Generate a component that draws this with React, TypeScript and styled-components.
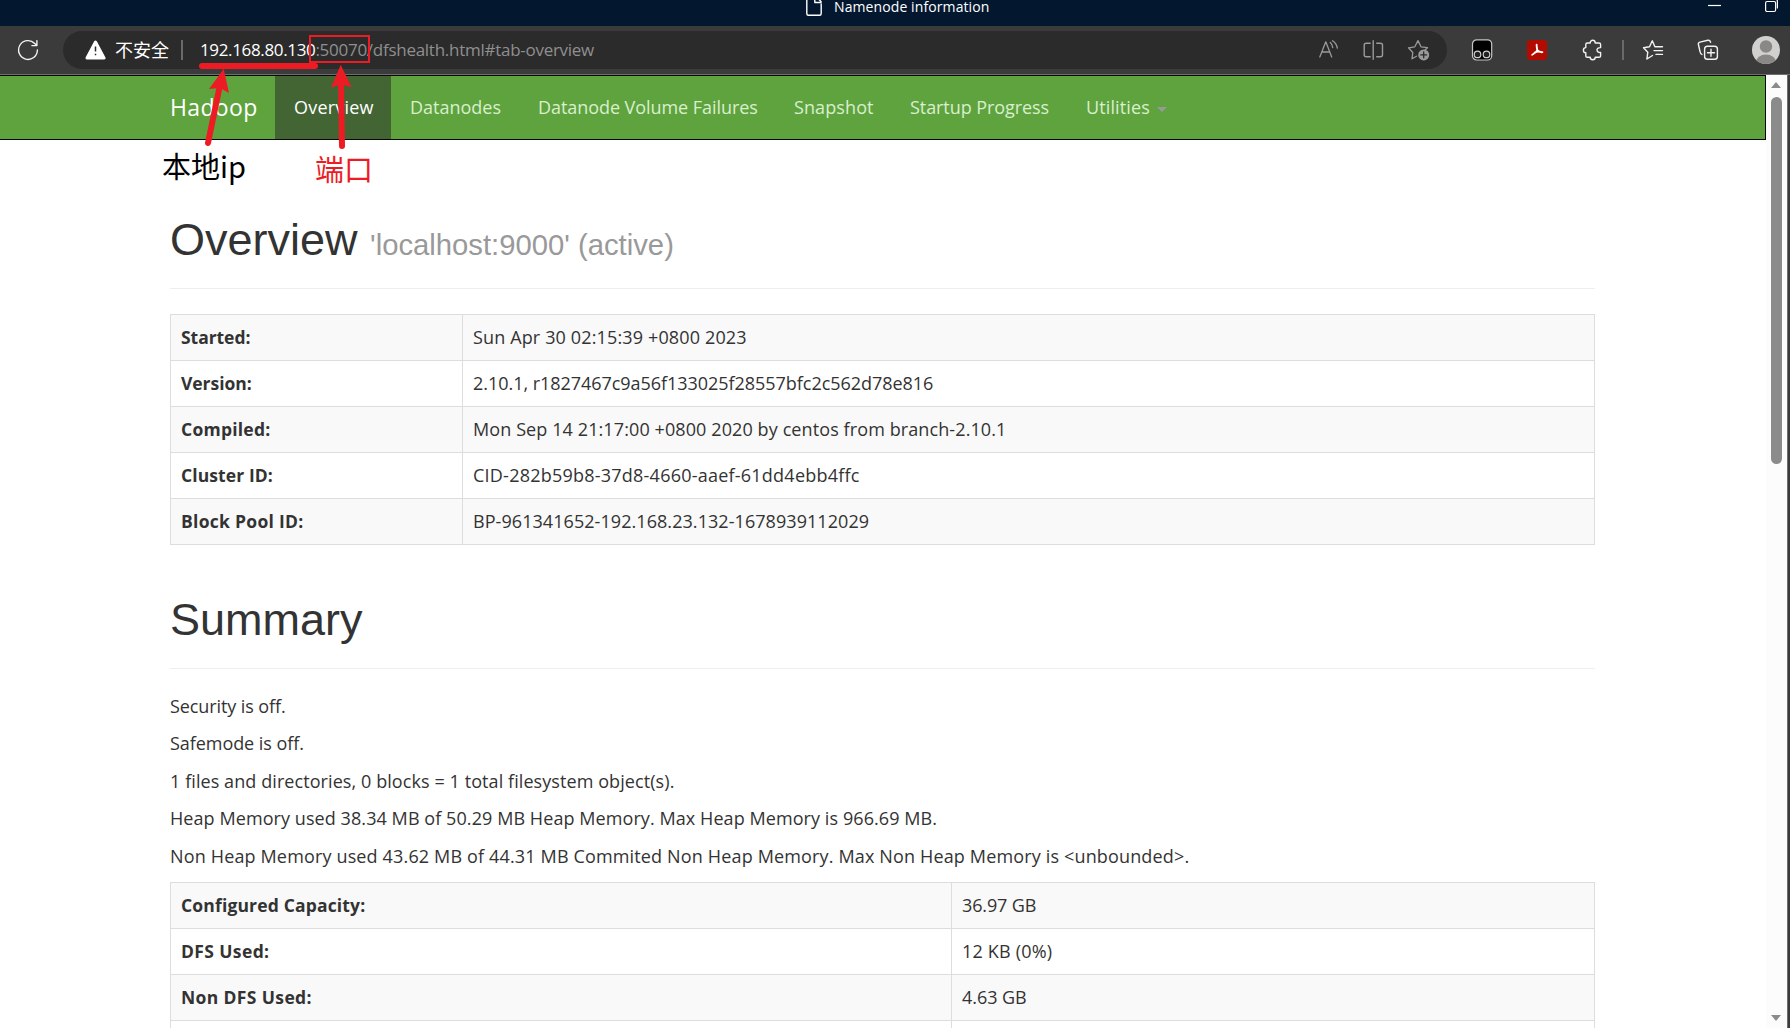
import React from "react";
import styled, { createGlobalStyle } from "styled-components";

const UI = `"Open Sans", "Noto Sans", "Noto Sans CJK SC", sans-serif`;
const HEADING = `"Liberation Sans", Arial, sans-serif`;
const RED = "#ed1c24";

const GlobalStyle = createGlobalStyle`
  *, *::before, *::after { box-sizing: border-box; }
  html, body { margin: 0; padding: 0; background: #fff; overflow: hidden; }
  svg { display: block; flex: none; }
`;

const Screen = styled.div`
  position: relative;
  display: flex;
  flex-direction: column;
  width: 1790px;
  height: 1028px;
  overflow: hidden;
  background: #3b3b3b;
  font-family: ${UI};
  color: #333;
`;

const TitleBar = styled.header`
  display: flex;
  height: 26px;
  flex: none;
  padding-left: 805px;
  background: #03182f;
  color: #fff;
`;

const TitleText = styled.span`
  margin-left: 11px;
  font-size: 14px;
  line-height: 14px;
  white-space: nowrap;
  letter-spacing: 0.1px;
`;

const WindowButtons = styled.div`
  display: flex;
  margin-left: auto;
  padding-right: 12px;
  gap: 42px;
`;

const Toolbar = styled.div`
  display: flex;
  align-items: center;
  height: 49px;
  flex: none;
  padding: 0 9px 0 16px;
  border-bottom: 1px solid #6e6e6e;
  background: #3b3b3b;
`;

const AddressBar = styled.div`
  display: flex;
  align-items: center;
  width: 1384px;
  height: 38px;
  margin: 0 23px;
  padding: 0 16px 0 22px;
  border-radius: 19px;
  background: #2b2b2b;
`;

const UnsafeLabel = styled.span`
  width: 58px;
  margin: -3px 0 0 9px;
  font: 18px/26px "Noto Sans CJK SC", sans-serif;
  color: #fff;
  white-space: nowrap;
`;

const Separator = styled.i<{ $ml: number; $mr: number }>`
  flex: none;
  width: 2px;
  height: 20px;
  margin: 0 ${(p) => p.$mr}px 0 ${(p) => p.$ml}px;
  background: #6a6a6a;
`;

const UrlPart = styled.span<{ $ls: number; $dim?: boolean }>`
  margin-top: -1px;
  font-size: 17px;
  line-height: 26px;
  white-space: nowrap;
  letter-spacing: ${(p) => p.$ls}px;
  color: ${(p) => (p.$dim ? "#8f8f8f" : "#fff")};
`;

const PillIcons = styled.div`
  display: flex;
  gap: 21px;
  margin-left: auto;
`;

const ExtensionIcons = styled.div`
  display: flex;
  align-items: center;
  gap: 31px;
`;

const Body = styled.div`
  display: flex;
  flex: 1;
  min-height: 0;
`;

const Page = styled.main`
  width: 1766px;
  overflow: hidden;
  background: #fff;
`;

const NavBar = styled.nav`
  display: flex;
  height: 65px;
  padding-left: 150px;
  border: 1px solid #080808;
  border-left: 0;
  background: #5fa33e;
`;

const Brand = styled.a`
  width: 125px;
  padding-left: 20px;
  font-size: 23px;
  line-height: 62px;
  color: #fff;
  letter-spacing: 0.35px;
`;

const NavItem = styled.a<{ $w: number; $ls: number; $active?: boolean }>`
  display: flex;
  align-items: center;
  width: ${(p) => p.$w}px;
  padding-left: 19px;
  font-size: 18px;
  line-height: 25px;
  white-space: nowrap;
  letter-spacing: ${(p) => p.$ls}px;
  color: ${(p) => (p.$active ? "#fff" : "#d9efce")};
  background: ${(p) => (p.$active ? "#436534" : "transparent")};
`;

const Caret = styled.i`
  margin: 4px 0 0 7px;
  border: 5px solid transparent;
  border-top-color: #999;
  border-bottom: 0;
`;

const Content = styled.div`
  width: 1425px;
  margin-left: 170px;
`;

const PageHeader = styled.div<{ $top: number; $gap: number }>`
  margin: ${(p) => p.$top}px 0 ${(p) => p.$gap}px;
  padding-bottom: 23px;
  border-bottom: 1px solid #eee;
`;

const Heading = styled.h1`
  height: 50px;
  margin: 0;
  font: 500 45px/50px ${HEADING};
  color: #333;
  small {
    font-size: 29.25px;
    font-weight: 400;
    line-height: 1;
    color: #999;
  }
`;

const InfoTable = styled.div<{ $first: number }>`
  display: grid;
  grid-template-columns: ${(p) => p.$first}px 1fr;
  border: solid #ddd;
  border-width: 1px 0 0 1px;
`;

const Cell = styled.div<{ $shaded: boolean; $strong?: boolean; $ls: number }>`
  height: 46px;
  padding: 9px 10px 0;
  border: solid #ddd;
  border-width: 0 1px 1px 0;
  background: ${(p) => (p.$shaded ? "#f9f9f9" : "#fff")};
  font-size: ${(p) => (p.$strong ? 17.5 : 18)}px;
  font-weight: ${(p) => (p.$strong ? 700 : 400)};
  line-height: 26px;
  white-space: nowrap;
  letter-spacing: ${(p) => p.$ls}px;
`;

const Paragraph = styled.p<{ $ls: number }>`
  margin: 0 0 14.5px;
  font-size: 18px;
  line-height: 23px;
  white-space: nowrap;
  letter-spacing: ${(p) => p.$ls}px;
`;

const ScrollTrack = styled.div`
  display: flex;
  flex-direction: column;
  align-items: center;
  width: 22px;
  padding: 7px 1px 7px 0;
  background: #fcfcfc;
  border-right: 1px solid #6e6e6e;
`;

const ScrollThumb = styled.div`
  width: 11px;
  height: 367px;
  margin: 9px 0 auto;
  border-radius: 6px;
  background: #8b8b8b;
`;

const Arrow = styled.i<{ $down?: boolean }>`
  border: 5.5px solid transparent;
  border-${(p) => (p.$down ? "top" : "bottom")}: 6px solid #8b8b8b;
  border-${(p) => (p.$down ? "bottom" : "top")}: 0;
`;

const Marks = styled.svg`
  position: absolute;
  left: 0;
  top: 0;
  pointer-events: none;
`;

const Note = styled.span<{ $x: number; $y: number; $color: string }>`
  position: absolute;
  left: ${(p) => p.$x}px;
  top: ${(p) => p.$y}px;
  font: 29px/36px "Noto Sans CJK SC", sans-serif;
  color: ${(p) => p.$color};
  white-space: nowrap;
`;

const line = { fill: "none", stroke: "currentColor", strokeLinecap: "round", strokeLinejoin: "round" } as const;

const DocIcon = () => (
  <svg width="18" height="18" viewBox="0 0 18 18" color="#fff" {...line} strokeWidth="1.4">
    <path d="M10 -2H3.5Q1.8 -2 1.8 0V13.5Q1.8 15.3 3.5 15.3H14.5Q16.2 15.3 16.2 13.5V4M9.8 -1V2.5H16V1.5L13 -1.5" />
  </svg>
);
const MinimizeIcon = () => (
  <svg width="15" height="12" viewBox="0 0 15 12" stroke="#fff" strokeWidth="1.2"><path d="M1 5.5H14" /></svg>
);
const RestoreIcon = () => (
  <svg width="14" height="14" viewBox="0 0 14 14" color="#fff" {...line} strokeWidth="1.2">
    <rect x="1.6" y="1.5" width="10" height="10" rx="1.5" />
    <path d="M13.4 8V1.5Q13.4 0 12.4 -1" />
  </svg>
);
const RefreshIcon = () => (
  <svg width="24" height="24" viewBox="0 0 24 24" color="#f2f2f2" {...line} strokeWidth="1.4">
    <path d="M21.4 12A9.4 9.4 0 1 1 18.7 5.4L20.9 7.6M20.9 2.6V7.6H15.9" />
  </svg>
);
const WarningIcon = () => (
  <svg width="21" height="20" viewBox="0 0 21 20">
    <path d="M10.5 2L19 18H2Z" fill="#fff" stroke="#fff" strokeWidth="3" strokeLinejoin="round" />
    <path d="M10.5 6.5V11.5M10.5 13.8V15.3" stroke="#2b2b2b" strokeWidth="1.5" />
  </svg>
);
const ReadAloudIcon = () => (
  <svg width="24" height="24" viewBox="0 0 24 24" color="#9a9a9a" {...line} strokeWidth="1.3">
    <path d="M2.8 19L8.8 3.8L14.7 19M5 14H12.6M13.3 4.5Q15.5 6.3 15.7 9.5M15.5 2.8Q19.6 5.4 20.3 10.2" />
  </svg>
);
const SplitIcon = () => (
  <svg width="24" height="24" viewBox="0 0 24 24" color="#9a9a9a" {...line} strokeWidth="1.4">
    <path d="M11.2 2.8V21.2M8.2 5.3H4.2Q2.2 5.3 2.2 7.3V16.7Q2.2 18.7 4.2 18.7H8.2M14.7 5.3H18.5Q20.5 5.3 20.5 7.3V16.7Q20.5 18.7 18.5 18.7H14.7" />
  </svg>
);
const StarAddIcon = () => (
  <svg width="24" height="24" viewBox="0 0 24 24" color="#9a9a9a" {...line} strokeWidth="1.3">
    <path d="M9.5 18.2L5 20.8L5.8 14.5L1.5 9.8L7.8 8.8L11 2.6L14 8.8L20.5 9.7L18 12" />
    <circle cx="16.7" cy="16.9" r="5.5" fill="#9a9a9a" stroke="none" />
    <path d="M16.7 14V19.8M13.8 16.9H19.6" stroke="#2b2b2b" />
  </svg>
);
const MonkeyIcon = () => (
  <svg width="24" height="24" viewBox="0 0 24 24">
    <rect x="2.5" y="1.8" width="19.2" height="20.2" rx="4.2" fill="#000" stroke="#c6c6c6" strokeWidth="1.2" />
    <circle cx="7.5" cy="16.4" r="3.3" fill="#222" stroke="#cfcfcf" strokeWidth="1.2" />
    <circle cx="16.5" cy="16.4" r="3.3" fill="#222" stroke="#cfcfcf" strokeWidth="1.2" />
  </svg>
);
const PdfIcon = () => (
  <svg width="24" height="24" viewBox="0 0 24 24">
    <rect x="2" y="2" width="20" height="20" rx="3" fill="#b30b00" />
    <path
      d="M11.6 6.6Q11.7 10 12.3 12.2Q10.8 15.2 7.2 16.8M12.3 12.2Q14.5 14.6 17.4 14.2M9.6 14.6Q13 12.9 17.4 14.2"
      fill="none" stroke="#fff" strokeWidth="1.8" strokeLinecap="round" strokeLinejoin="round"
    />
  </svg>
);
const PuzzleIcon = () => (
  <svg width="24" height="24" viewBox="0 0 24 24" color="#f2f2f2" {...line} strokeWidth="1.4">
    <path d="M5.8 6.4Q5.8 5 7.2 5H10.2C10.2 1.4 15.2 1.4 15.2 5H19Q20.6 5 20.6 6.4V9.6C15.8 9.2 15.8 14.9 20.6 14.5V17.9Q20.6 19.3 19 19.3H15.2C15.2 22.6 10.2 22.6 10.2 19.3H7.2Q5.8 19.3 5.8 17.9V14.7C2.6 14.7 2.6 9.6 5.8 9.6Z" />
  </svg>
);
const FavoritesIcon = () => (
  <svg width="24" height="24" viewBox="0 0 24 24" color="#f2f2f2" {...line} strokeWidth="1.4">
    <path d="M14.5 8.8H13.9L11.3 2.8L8.5 8.8L2.5 9.7L6.8 14.2L5.9 21L11.5 17.5M14.5 8.8H21.5M13 12.6H21.5M15 16.4H21.5" />
  </svg>
);
const CollectionsIcon = () => (
  <svg width="24" height="24" viewBox="0 0 24 24" color="#f2f2f2" {...line} strokeWidth="1.4">
    <path d="M6 16.5Q4.3 15.5 4 13.5L2.4 6.5Q2 4.6 3.9 4.1L11.8 2.3Q14 2 14.6 4.2" />
    <rect x="8.6" y="8.2" width="12.8" height="13" rx="2.8" />
    <path d="M15 11.2V18.2M11.5 14.7H18.5" />
  </svg>
);
const Avatar = () => (
  <svg width="28" height="28" viewBox="0 0 28 28">
    <defs><clipPath id="face"><circle cx="14" cy="14" r="14" /></clipPath></defs>
    <g clipPath="url(#face)">
      <rect width="28" height="28" fill="#d2d0ce" />
      <circle cx="14" cy="10.5" r="6.2" fill="#8a8886" />
      <ellipse cx="14" cy="26" rx="10" ry="7.5" fill="#8a8886" />
    </g>
  </svg>
);

const AvatarButton = styled.span`
  margin-left: 1px;
`;

/* label, value, and the tracking of each */
type Row = [string, string, number, number];
const overviewRows: Row[] = [
  ["Started:", "Sun Apr 30 02:15:39 +0800 2023", -0.05, 0.14],
  ["Version:", "2.10.1, r1827467c9a56f133025f28557bfc2c562d78e816", -0.05, -0.04],
  ["Compiled:", "Mon Sep 14 21:17:00 +0800 2020 by centos from branch-2.10.1", 0.24, 0.1],
  ["Cluster ID:", "CID-282b59b8-37d8-4660-aaef-61dd4ebb4ffc", 0.1, 0.23],
  ["Block Pool ID:", "BP-961341652-192.168.23.132-1678939112029", 0.28, 0.06],
];
const summaryRows: Row[] = [
  ["Configured Capacity:", "36.97 GB", 0.16, -0.12],
  ["DFS Used:", "12 KB (0%)", 0.38, 0.18],
  ["Non DFS Used:", "4.63 GB", 0.36, -0.05],
  ["", "", 0, 0],
];
const paragraphs: [string, number][] = [
  ["Security is off.", -0.09],
  ["Safemode is off.", -0.06],
  ["1 files and directories, 0 blocks = 1 total filesystem object(s).", 0.08],
  ["Heap Memory used 38.34 MB of 50.29 MB Heap Memory. Max Heap Memory is 966.69 MB.", 0.075],
  ["Non Heap Memory used 43.62 MB of 44.31 MB Commited Non Heap Memory. Max Non Heap Memory is <unbounded>.", 0.152],
];
const nav: [string, number, number][] = [
  ["Overview", 116, 0.2],
  ["Datanodes", 128, 0],
  ["Datanode Volume Failures", 256, -0.06],
  ["Snapshot", 116, 0.1],
  ["Startup Progress", 176, -0.07],
  ["Utilities", 120, 0.12],
];

const Rows = ({ rows, first }: { rows: Row[]; first: number }) => (
  <InfoTable $first={first}>
    {rows.map(([label, value, labelLs, valueLs], i) => (
      <React.Fragment key={i}>
        <Cell $strong $ls={labelLs} $shaded={i % 2 === 0}>{label}</Cell>
        <Cell $ls={valueLs} $shaded={i % 2 === 0}>{value}</Cell>
      </React.Fragment>
    ))}
  </InfoTable>
);

export default function App() {
  return (
    <>
      <GlobalStyle />
      <Screen>
        <TitleBar>
          <DocIcon />
          <TitleText>Namenode information</TitleText>
          <WindowButtons><MinimizeIcon /><RestoreIcon /></WindowButtons>
        </TitleBar>
        <Toolbar>
          <RefreshIcon />
          <AddressBar>
            <WarningIcon />
            <UnsafeLabel>不安全</UnsafeLabel>
            <Separator $ml={8} $mr={17} />
            <UrlPart $ls={-0.35}>192.168.80.130</UrlPart>
            <UrlPart $ls={-0.27} $dim>:50070/dfshealth.html#tab-overview</UrlPart>
            <PillIcons><ReadAloudIcon /><SplitIcon /><StarAddIcon /></PillIcons>
          </AddressBar>
          <ExtensionIcons><MonkeyIcon /><PdfIcon /><PuzzleIcon /></ExtensionIcons>
          <Separator $ml={18} $mr={17} />
          <ExtensionIcons>
            <FavoritesIcon />
            <CollectionsIcon />
            <AvatarButton><Avatar /></AvatarButton>
          </ExtensionIcons>
        </Toolbar>
        <Body>
          <Page>
            <NavBar>
              <Brand>Hadoop</Brand>
              {nav.map(([label, width, ls], i) => (
                <NavItem key={label} $w={width} $ls={ls} $active={i === 0}>
                  {label}
                  {label === "Utilities" && <Caret />}
                </NavItem>
              ))}
            </NavBar>
            <Content>
              <PageHeader $top={75} $gap={25}>
                <Heading>Overview <small>'localhost:9000' (active)</small></Heading>
              </PageHeader>
              <Rows rows={overviewRows} first={292} />
              <PageHeader $top={50} $gap={25.7}><Heading>Summary</Heading></PageHeader>
              {paragraphs.map(([text, ls]) => <Paragraph key={text} $ls={ls}>{text}</Paragraph>)}
              <Rows rows={summaryRows} first={781} />
            </Content>
          </Page>
          <ScrollTrack><Arrow /><ScrollThumb /><Arrow $down /></ScrollTrack>
        </Body>
        <Marks width="400" height="200" viewBox="0 0 400 200" fill="none" stroke={RED} strokeWidth="6" strokeLinecap="round">
          <path d="M202 66H315M208 143L220 85M342 146L341 82" />
          <rect x="310" y="36" width="59" height="26" strokeWidth="2" strokeLinecap="butt" />
          <path d="M223.7 68.7L229 93L220 88L209 89ZM340.7 64.7L351.7 87.5L341 84L331 87.7Z" fill={RED} stroke="none" />
        </Marks>
        <Note $x={162} $y={147} $color="#000">本地ip</Note>
        <Note $x={315} $y={150} $color={RED}>端口</Note>
      </Screen>
    </>
  );
}
